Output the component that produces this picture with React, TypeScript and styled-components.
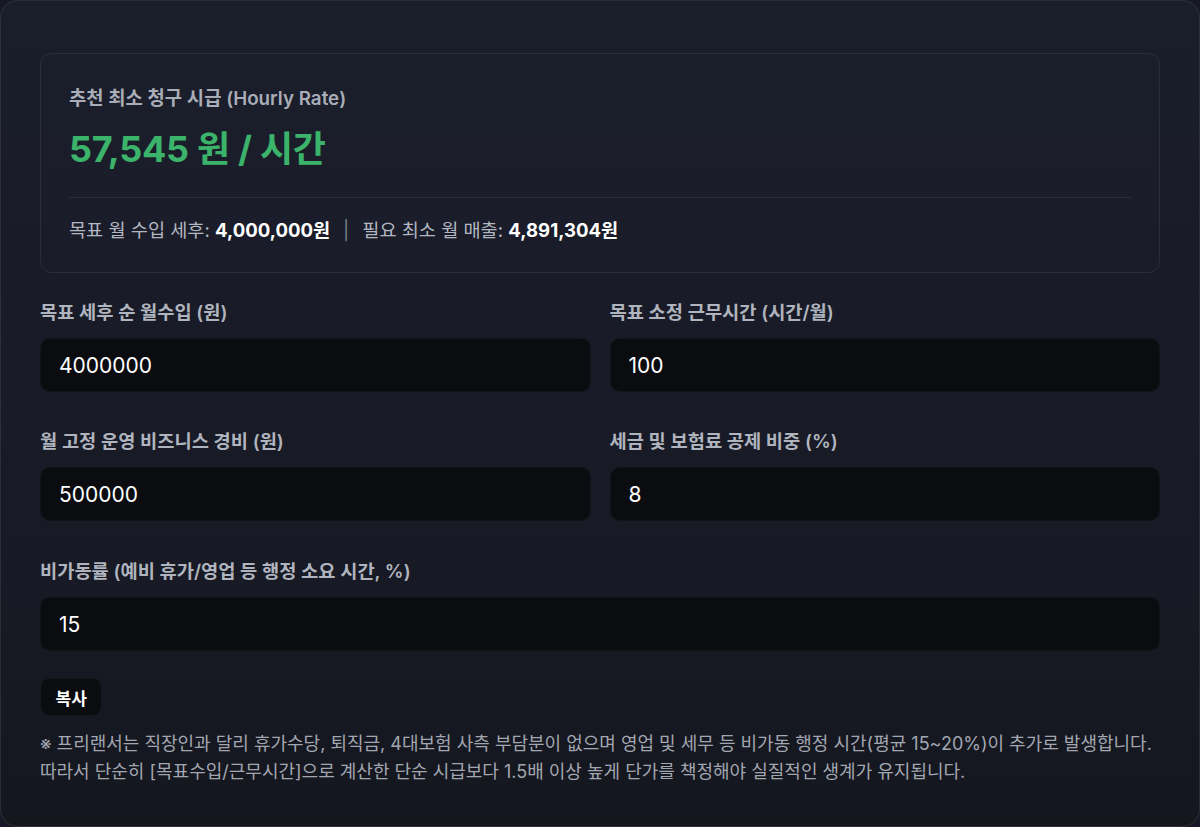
import styled, { createGlobalStyle } from "styled-components";

const GlobalStyle = createGlobalStyle`
  html, body {
    margin: 0;
    padding: 0;
    background: #161925;
  }
  body {
    font-family: "Inter", "Noto Sans CJK KR", sans-serif;
    -webkit-font-smoothing: antialiased;
  }
  * {
    box-sizing: border-box;
  }
`;

const Panel = styled.div`
  height: 827px;
  border: 1px solid rgba(255, 255, 255, 0.09);
  border-radius: 18px;
  background: linear-gradient(180deg, #1a1d2a 0%, #181b26 60%, #15171f 100%);
  padding: 52px 39px 0;
`;

const ResultCard = styled.section`
  border: 1px solid rgba(255, 255, 255, 0.07);
  border-radius: 12px;
  background: rgba(255, 255, 255, 0.008);
  padding: 33px 28px 0;
  height: 220px;
`;

const ResultTitle = styled.div`
  font-size: 18.8px;
  font-weight: 600;
  color: #a9adb8;
  line-height: 24px;
`;

const Rate = styled.div`
  margin-top: 16px;
  font-size: 36px;
  font-weight: 700;
  color: #3cb36a;
  line-height: 44px;
  letter-spacing: -0.3px;
`;

const Divider = styled.hr`
  margin: 26px 0 0;
  border: none;
  border-top: 1px solid rgba(255, 255, 255, 0.08);
`;

const Summary = styled.div`
  margin-top: 20px;
  font-size: 18.6px;
  color: #b3b7c1;
  line-height: 24px;
`;

const Strong = styled.b`
  color: #ffffff;
  font-weight: 700;
`;

const Sep = styled.span`
  color: #7b808c;
  margin: 0 13px;
`;

const FieldGrid = styled.div`
  display: grid;
  grid-template-columns: 1fr 1fr;
  column-gap: 19px;
  row-gap: 38px;
  margin-top: 28px;
`;

const Field = styled.label<{ $wide?: boolean }>`
  display: flex;
  flex-direction: column;
  gap: 13px;
  grid-column: ${(p) => (p.$wide ? "1 / -1" : "auto")};
  margin-top: ${(p) => (p.$wide ? "1px" : "0")};
`;

const FieldLabel = styled.span`
  font-size: 18.7px;
  font-weight: 600;
  color: #b0b4be;
  line-height: 24px;
`;

const Input = styled.input`
  height: 54px;
  border: 1px solid rgba(255, 255, 255, 0.03);
  border-radius: 10px;
  background: #0b0c10;
  color: #ffffff;
  font-family: inherit;
  font-size: 21px;
  padding: 0 18px;
  outline: none;
`;

const CopyButton = styled.button`
  margin-top: 27px;
  height: 38px;
  padding: 0 14.5px;
  border: 1px solid rgba(255, 255, 255, 0.05);
  border-radius: 9px;
  background: #0b0c10;
  color: #ffffff;
  font-family: inherit;
  font-size: 17px;
  font-weight: 700;
  cursor: pointer;
`;

const Note = styled.p`
  margin: 14px 0 0;
  font-size: 18px;
  color: #a2a6b0;
  line-height: 28px;
`;

const fields = [
  { label: "목표 세후 순 월수입 (원)", value: "4000000" },
  { label: "목표 소정 근무시간 (시간/월)", value: "100" },
  { label: "월 고정 운영 비즈니스 경비 (원)", value: "500000" },
  { label: "세금 및 보험료 공제 비중 (%)", value: "8" },
  { label: "비가동률 (예비 휴가/영업 등 행정 소요 시간, %)", value: "15", wide: true },
];

export default function App() {
  return (
    <>
      <GlobalStyle />
      <Panel>
        <ResultCard>
          <ResultTitle>추천 최소 청구 시급 (Hourly Rate)</ResultTitle>
          <Rate>57,545 원 / 시간</Rate>
          <Divider />
          <Summary>
            목표 월 수입 세후: <Strong>4,000,000원</Strong>
            <Sep>|</Sep>
            필요 최소 월 매출: <Strong>4,891,304원</Strong>
          </Summary>
        </ResultCard>

        <FieldGrid>
          {fields.map((f) => (
            <Field key={f.label} $wide={f.wide}>
              <FieldLabel>{f.label}</FieldLabel>
              <Input defaultValue={f.value} />
            </Field>
          ))}
        </FieldGrid>

        <CopyButton>복사</CopyButton>

        <Note>
          ※ 프리랜서는 직장인과 달리 휴가수당, 퇴직금, 4대보험 사측 부담분이 없으며 영업 및 세무 등 비가동 행정 시간(평균 15~20%)이 추가로 발생합니다.
          <br />
          따라서 단순히 [목표수입/근무시간]으로 계산한 단순 시급보다 1.5배 이상 높게 단가를 책정해야 실질적인 생계가 유지됩니다.
        </Note>
      </Panel>
    </>
  );
}
